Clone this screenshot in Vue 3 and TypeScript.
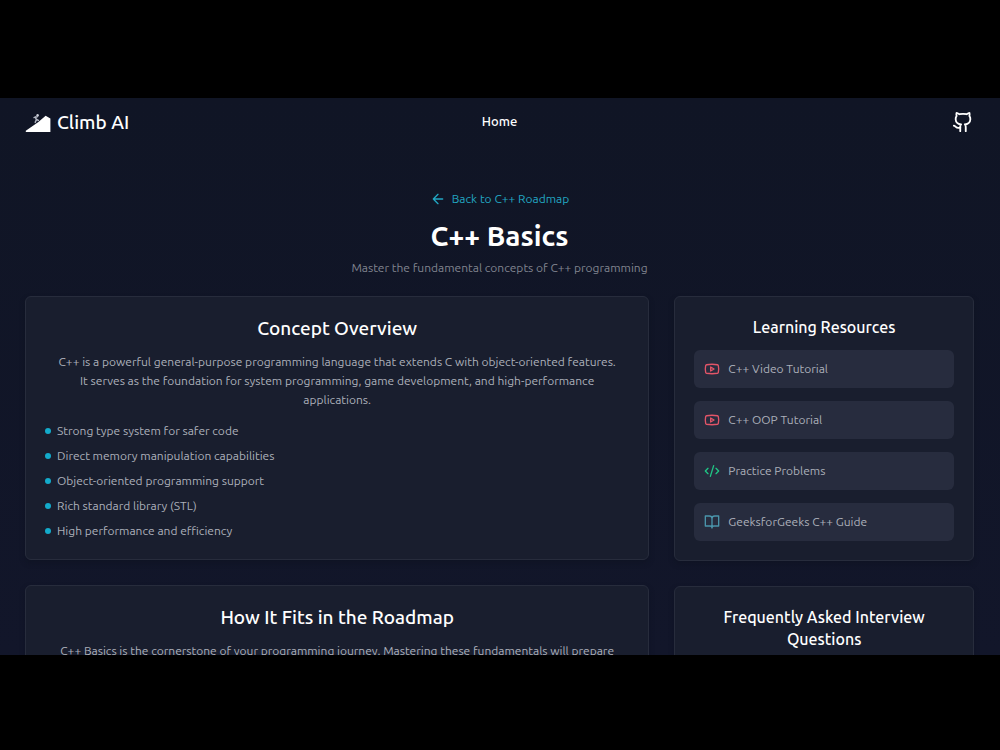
<script setup lang="ts">
interface Resource {
  label: string
  kind: 'video' | 'code' | 'book'
}

const features: string[] = [
  'Strong type system for safer code',
  'Direct memory manipulation capabilities',
  'Object-oriented programming support',
  'Rich standard library (STL)',
  'High performance and efficiency',
]

const resources: Resource[] = [
  { label: 'C++ Video Tutorial', kind: 'video' },
  { label: 'C++ OOP Tutorial', kind: 'video' },
  { label: 'Practice Problems', kind: 'code' },
  { label: 'GeeksforGeeks C++ Guide', kind: 'book' },
]
</script>

<template>
  <div class="stage">
    <div class="screen">
      <header class="topbar">
        <a class="brand" href="#">
          <svg class="brand-mark" viewBox="0 0 26 20" aria-hidden="true">
            <path d="M0.8 18.8 L13.4 10 L20.6 3.8 L25.4 6.6 V20 H0.8 Z" fill="#fff" stroke="none" />
            <circle cx="12.6" cy="3.2" r="1.2" fill="#c9ccd6" stroke="none" />
            <path d="M12.6 4.6 L10.4 5.4 L11.4 7.6 L10.2 10.4 M10.6 4.8 L9 5.6 M11.6 7.4 L13.4 8.4" stroke="#b4b8c4" stroke-width="1.4" />
          </svg>
          <span>Climb AI</span>
        </a>
        <nav class="nav"><a href="#">Home</a></nav>
        <a class="github" href="#" aria-label="GitHub">
          <svg viewBox="0 0 24 24" aria-hidden="true">
            <path d="M15 22v-4a4.8 4.8 0 0 0-1-3.5c3 0 6-2 6-5.5.08-1.25-.27-2.48-1-3.5.28-1.15.28-2.35 0-3.5 0 0-1 0-3 1.5-2.64-.5-5.36-.5-8 0C6 2 5 2 5 2c-.3 1.15-.3 2.35 0 3.5A5.403 5.403 0 0 0 4 9c0 3.5 3 5.5 6 5.5-.39.49-.68 1.05-.85 1.65-.17.6-.22 1.23-.15 1.85v4" />
            <path d="M9 18c-4.51 2-5-2-7-2" />
          </svg>
        </a>
      </header>

      <main class="content">
        <div class="intro">
          <a class="back" href="#">
            <svg viewBox="0 0 24 24" aria-hidden="true"><path d="m12 19-7-7 7-7M19 12H5" /></svg>
            <span>Back to C++ Roadmap</span>
          </a>
          <h1>C++ Basics</h1>
          <p>Master the fundamental concepts of C++ programming</p>
        </div>

        <div class="columns">
          <div class="primary">
            <section class="card">
              <h2>Concept Overview</h2>
              <p>
                C++ is a powerful general-purpose programming language that extends C with
                object-oriented features. It serves as the foundation for system programming, game
                development, and high-performance applications.
              </p>
              <ul class="features">
                <li v-for="item in features" :key="item">{{ item }}</li>
              </ul>
            </section>
            <section class="card">
              <h2>How It Fits in the Roadmap</h2>
              <p>
                C++ Basics is the cornerstone of your programming journey. Mastering these
                fundamentals will prepare
              </p>
            </section>
          </div>

          <aside class="secondary">
            <section class="card">
              <h3>Learning Resources</h3>
              <ul class="resources">
                <li v-for="item in resources" :key="item.label">
                  <a href="#">
                    <svg :class="item.kind" viewBox="0 0 24 24" aria-hidden="true">
                      <template v-if="item.kind === 'video'">
                        <path d="M2.5 17a24.12 24.12 0 0 1 0-10 2 2 0 0 1 1.4-1.4 49.56 49.56 0 0 1 16.2 0A2 2 0 0 1 21.5 7a24.12 24.12 0 0 1 0 10 2 2 0 0 1-1.4 1.4 49.55 49.55 0 0 1-16.2 0A2 2 0 0 1 2.5 17" />
                        <path d="m10 15 5-3-5-3z" />
                      </template>
                      <path v-else-if="item.kind === 'code'" d="m18 16 4-4-4-4M6 8l-4 4 4 4M14.5 4l-5 16" />
                      <path v-else d="M12 7v14M12 7a4 4 0 0 0-4-4H2v15h7a3 3 0 0 1 3 3 3 3 0 0 1 3-3h7V3h-6a4 4 0 0 0-4 4z" />
                    </svg>
                    <span>{{ item.label }}</span>
                  </a>
                </li>
              </ul>
            </section>
            <section class="card">
              <h3>Frequently Asked Interview Questions</h3>
            </section>
          </aside>
        </div>
      </main>
    </div>
  </div>
</template>

<style>
body {
  margin: 0;
  background: #000;
}
</style>

<style scoped>
.stage {
  box-sizing: border-box;
  height: 100vh;
  padding: 98px 0 95px;
  background: #000;
  color: #fff;
  font-family: Ubuntu, "Noto Sans", "Open Sans", sans-serif;
  font-size: 12px;
  line-height: 19px;
}
.screen {
  height: 100%;
  overflow: hidden;
  background: linear-gradient(#101525, #12162a);
}
h1, h2, h3, p, ul {
  margin: 0;
  padding: 0;
}
ul {
  list-style: none;
}
a {
  color: inherit;
  text-decoration: none;
}
svg {
  flex: none;
  fill: none;
  stroke: currentColor;
  stroke-width: 2;
  stroke-linecap: round;
  stroke-linejoin: round;
}
.topbar {
  display: grid;
  grid-template-columns: 1fr auto 1fr;
  align-items: center;
  height: 47px;
  padding: 0 26px 0 25px;
}
.brand {
  display: flex;
  align-items: center;
  gap: 6px;
  font-size: 19px;
  font-weight: 500;
  line-height: 24px;
}
.brand-mark {
  width: 26px;
  height: 20px;
}
.nav {
  font-size: 13px;
  font-weight: 500;
}
.github {
  display: flex;
  justify-self: end;
}
.github svg {
  width: 22px;
  height: 22px;
}
.content {
  padding: 44px 26px 0 25px;
}
.intro {
  display: flex;
  flex-direction: column;
  align-items: center;
  margin-bottom: 19px;
  text-align: center;
}
.back {
  display: flex;
  align-items: center;
  gap: 6px;
  color: #22a7c3;
}
.back svg {
  width: 16px;
  height: 16px;
}
h1 {
  margin: 10px 0 4px;
  font-size: 28px;
  font-weight: 600;
  line-height: 36px;
}
.intro p {
  color: #80848f;
}
.columns {
  display: grid;
  grid-template-columns: repeat(3, minmax(0, 1fr));
  gap: 25px;
}
.primary,
.secondary {
  display: flex;
  flex-direction: column;
  gap: 25px;
}
.primary {
  grid-column: span 2;
}
.card {
  padding: 19px;
  border: 1px solid #272c3c;
  border-radius: 6px;
  background: #191e2e;
  box-shadow: 0 3px 5px #0d112080;
}
h2,
h3 {
  font-weight: 500;
  text-align: center;
}
h2 {
  margin-bottom: 11px;
  font-size: 19px;
  line-height: 25px;
}
h3 {
  margin-bottom: 12px;
  font-size: 16px;
  line-height: 22px;
}
.card p {
  padding: 0 10px;
  color: #acb0ba;
  text-align: center;
}
.features {
  display: flex;
  flex-direction: column;
  gap: 6px;
  margin-top: 12px;
  color: #acb0ba;
}
.features li {
  display: flex;
  align-items: center;
  gap: 6px;
}
.features li::before {
  width: 6px;
  height: 6px;
  border-radius: 50%;
  background: #13abcb;
  content: "";
}
.resources {
  display: flex;
  flex-direction: column;
  gap: 13px;
}
.resources a {
  display: flex;
  align-items: center;
  gap: 8px;
  padding: 9px 10px 10px;
  border-radius: 6px;
  background: #272c3e;
  color: #acb0ba;
}
.resources svg {
  width: 16px;
  height: 16px;
}
.video {
  color: #e25568;
}
.code {
  color: #20c685;
}
.book {
  color: #4a94aa;
}
</style>
